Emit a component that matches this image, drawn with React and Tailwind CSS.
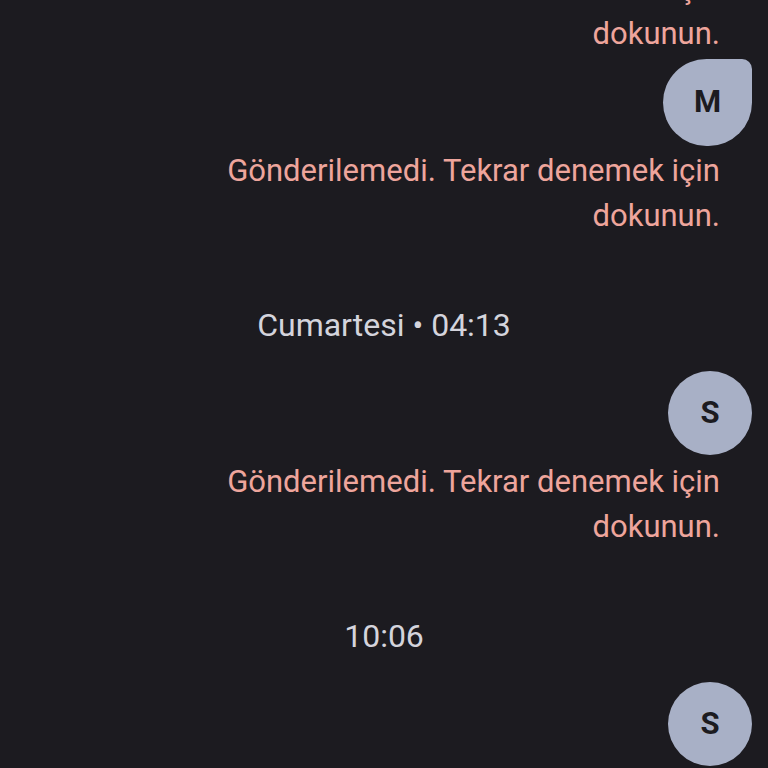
import React from 'react';

const ErrorNote = () => (
  <div className="flex justify-end pr-[48px]">
    <p className="text-right text-[31px] leading-[45px] text-[#eea59c] w-[520px]">
      Gönderilemedi. Tekrar denemek için dokunun.
    </p>
  </div>
);

const Bubble = ({ letter, tail }) => (
  <div className="flex justify-end pr-[16px]">
    <div
      className={
        tail
          ? 'w-[89px] h-[87px] bg-[#a8b0c6] rounded-[44px] rounded-tr-[10px] flex items-center justify-center'
          : 'w-[84px] h-[84px] bg-[#a8b0c6] rounded-full flex items-center justify-center'
      }
    >
      <span className="text-[31px] font-bold text-[#1c1b20]">{letter}</span>
    </div>
  </div>
);

const Stamp = ({ children }) => (
  <div className="h-[133px] flex items-end justify-center pb-[26px]">
    <span className="text-[32px] leading-[40px] text-[#d4d4dc]">{children}</span>
  </div>
);

export default function App() {
  return (
    <div
      className="w-[768px] h-[768px] overflow-hidden bg-[#1c1b20]"
      style={{ fontFamily: 'Roboto, "Noto Sans", sans-serif' }}
    >
      <div className="flex flex-col -mt-[34px]">
        <ErrorNote />
        <div className="h-[3px]" />
        <Bubble letter="M" tail />
        <div className="h-[2px]" />
        <ErrorNote />
        <Stamp>Cumartesi • 04:13</Stamp>
        <Bubble letter="S" />
        <div className="h-[4px]" />
        <ErrorNote />
        <Stamp>10:06</Stamp>
        <Bubble letter="S" />
      </div>
    </div>
  );
}
